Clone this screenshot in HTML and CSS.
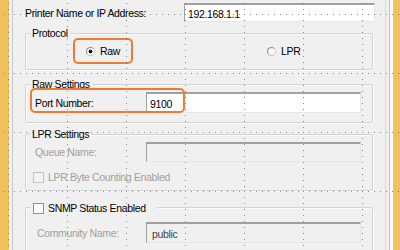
FILE: index.html
```html
<!DOCTYPE html>
<html lang="en">
<head>
  <meta charset="UTF-8">
  <title>Printer Port Settings</title>
  <link rel="stylesheet" href="styles.css">
</head>
<body>
  <div class="designer">
    <div class="edge-left"></div>

    <main class="form">
      <div class="top-row">
        <span class="label wide">Printer Name or IP Address:</span>
        <span class="textbox address">192.168.1.1</span>
      </div>

      <section class="group protocol">
        <span class="legend">Protocol</span>
        <div class="radio-row">
          <span class="option highlight raw-option"><span class="radio checked"></span>Raw</span>
          <span class="option lpr-option"><span class="radio"></span>LPR</span>
        </div>
      </section>

      <section class="group raw-settings">
        <span class="legend">Raw Settings</span>
        <div class="field-row">
          <span class="label">Port Number:</span>
          <span class="textbox">9100</span>
        </div>
        <span class="highlight port-mark"></span>
      </section>

      <section class="group lpr-settings">
        <span class="legend">LPR Settings</span>
        <div class="field-row disabled">
          <span class="label">Queue Name:</span>
          <span class="textbox"></span>
        </div>
        <div class="check-row disabled">
          <span class="checkbox"></span>LPR Byte Counting Enabled
        </div>
      </section>

      <section class="group snmp">
        <span class="legend legend-check"><span class="checkbox"></span>SNMP Status Enabled</span>
        <div class="field-row disabled community">
          <span class="label">Community Name:</span>
          <span class="textbox">public</span>
        </div>
      </section>
    </main>

    <div class="edge-right"></div>
  </div>

  <svg class="grid" width="400" height="250" aria-hidden="true">
    <defs>
      <pattern id="dots" x="8" y="14" width="59" height="59" patternUnits="userSpaceOnUse">
        <g fill="#6f6f6f">
          <rect x="0" y="0" width="1" height="1"/>
          <rect x="0" y="6" width="1" height="1"/>
          <rect x="0" y="12" width="1" height="1"/>
          <rect x="0" y="18" width="1" height="1"/>
          <rect x="0" y="24" width="1" height="1"/>
          <rect x="0" y="30" width="1" height="1"/>
          <rect x="0" y="36" width="1" height="1"/>
          <rect x="0" y="42" width="1" height="1"/>
          <rect x="0" y="48" width="1" height="1"/>
          <rect x="0" y="54" width="1" height="1"/>
          <rect x="6" y="0" width="1" height="1"/>
          <rect x="12" y="0" width="1" height="1"/>
          <rect x="18" y="0" width="1" height="1"/>
          <rect x="24" y="0" width="1" height="1"/>
          <rect x="30" y="0" width="1" height="1"/>
          <rect x="36" y="0" width="1" height="1"/>
          <rect x="42" y="0" width="1" height="1"/>
          <rect x="48" y="0" width="1" height="1"/>
          <rect x="54" y="0" width="1" height="1"/>
        </g>
      </pattern>
    </defs>
    <rect width="400" height="250" fill="url(#dots)" opacity="0.8"/>
  </svg>
</body>
</html>
```

FILE: styles.css
```css
html, body {
  margin: 0;
  height: 100%;
  overflow: hidden;
}

body {
  position: relative;
  background: #f0f0f0;
  color: #000;
  font-family: "Liberation Sans", Arial, sans-serif;
  font-size: 10.5px;
  letter-spacing: -0.35px;
}

.designer {
  display: flex;
  height: 250px;
}

.edge-left {
  flex: 0 0 14px;
  background: linear-gradient(to right,
    #f0c25e 0 9px, #fafafa 9px 10px, #f0f0f0 10px 12px,
    #c8c8c8 12px 13px, #f0f0f0 13px);
}

.edge-right {
  flex: 0 0 15px;
  background: linear-gradient(to right,
    #dadada 0 1px, #f0f0f0 1px 4px, #c4c4c4 4px 5px,
    #fafafa 5px 8px, #f0c25e 8px);
}

.form {
  flex: 1;
  padding-left: 11px;
}

.top-row {
  display: flex;
  align-items: center;
  height: 19px;
  margin-top: 3px;
}

.label {
  flex: 0 0 111px;
}

.label.wide {
  flex-basis: 159px;
}

.textbox {
  box-sizing: border-box;
  display: flex;
  align-items: center;
  width: 215px;
  height: 21px;
  padding: 1px 0 0 3px;
  background: #fff;
  border-style: solid;
  border-width: 2px 1px 1px 1px;
  border-color: #a0a0a0 #e6e6e6 #e6e6e6 #a0a0a0;
  color: #000;
}

.textbox.address {
  width: 191px;
  height: 19px;
}

/* group boxes */
.group {
  position: relative;
  box-sizing: border-box;
  width: 348px;
  border: 1px solid #d3d3d3;
  border-radius: 2px;
  box-shadow: inset 1px 1px 0 #fbfbfb, 1px 1px 0 #fbfbfb;
}

.legend {
  position: absolute;
  top: -7px;
  left: 4px;
  padding: 0 2px;
  line-height: 12px;
  background: #f0f0f0;
}

.protocol {
  margin-top: 11px;
  height: 37px;
}

.raw-settings {
  margin-top: 14px;
  height: 39px;
}

.lpr-settings {
  margin-top: 11px;
  height: 57px;
}

.snmp {
  margin-top: 16px;
  height: 43px;
  border-bottom: none;
  border-radius: 2px 2px 0 0;
}

.radio-row {
  display: flex;
  align-items: center;
  padding: 4px 0 0 47px;
}

.option {
  display: flex;
  align-items: center;
}

.radio {
  box-sizing: border-box;
  width: 9px;
  height: 9px;
  margin-right: 5px;
  border: 1px solid #8f8f8f;
  border-right-color: #d2d2d2;
  border-bottom-color: #c4c4c4;
  border-radius: 50%;
  background: #f6f6f6;
}

.radio.checked {
  background: radial-gradient(circle, #111 0 1.6px, #f6f6f6 2.2px);
}

.highlight {
  box-sizing: border-box;
  border: 2px solid #ee7b30;
  border-radius: 5px;
}

.raw-option {
  width: 60px;
  height: 26px;
  padding-left: 11px;
}

.lpr-option {
  margin-left: 134px;
}

.field-row {
  display: flex;
  align-items: center;
  padding: 7px 0 0 9px;
}

.port-mark {
  position: absolute;
  left: 4px;
  top: 3px;
  width: 155px;
  height: 25px;
}

.disabled {
  color: #a0a0a0;
}

.disabled .textbox {
  background: #f0f0f0;
  height: 20px;
}

.community {
  padding: 14px 0 0 11px;
}

.community .label {
  flex-basis: 109px;
}

.community .textbox {
  height: 21px;
  color: #444;
  padding-left: 5px;
}

.check-row {
  display: flex;
  align-items: center;
  margin-top: 10px;
  padding-left: 7px;
  height: 10px;
}

.checkbox {
  box-sizing: border-box;
  width: 11px;
  height: 11px;
  margin-right: 4px;
  border: 1px solid #c2c2c2;
  background: #f3f3f3;
}

.legend-check {
  display: flex;
  align-items: center;
  left: 5px;
  top: -6px;
  width: 126px;
  box-sizing: border-box;
}

.legend-check .checkbox {
  border-color: #8e8f8f;
  background: #fff;
}

.grid {
  position: absolute;
  left: 0;
  top: 0;
  pointer-events: none;
}
```
